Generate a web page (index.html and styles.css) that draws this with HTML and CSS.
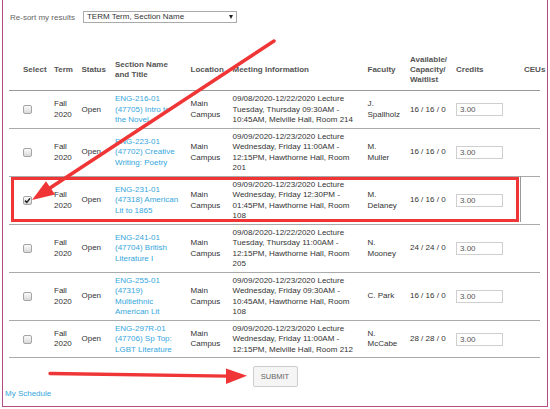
FILE: index.html
```html
<!DOCTYPE html>
<html lang="en">

<head>
    <meta charset="UTF-8">
    <meta name="viewport" content="width=device-width, initial-scale=1.0">
    <title>Section Search Results</title>
    <link rel="stylesheet" href="styles.css">
</head>

<body>
    <div class="page">
        <div class="sort-bar">
            <span class="sort-label">Re-sort my results</span>
            <span class="select-wrap">
                <select class="sort-select">
                    <option>TERM Term, Section Name</option>
                </select>
            </span>
        </div>

        <table class="results">
            <colgroup>
                <col class="c-select">
                <col class="c-term">
                <col class="c-status">
                <col class="c-section">
                <col class="c-location">
                <col class="c-meeting">
                <col class="c-faculty">
                <col class="c-avail">
                <col class="c-credits">
                <col class="c-ceus">
            </colgroup>
            <thead>
                <tr>
                    <th class="select">Select</th>
                    <th>Term</th>
                    <th>Status</th>
                    <th class="section">Section Name and Title</th>
                    <th>Location</th>
                    <th class="meeting">Meeting Information</th>
                    <th class="faculty">Faculty</th>
                    <th class="avail">Available/ Capacity/ Waitlist</th>
                    <th>Credits</th>
                    <th>CEUs</th>
                </tr>
            </thead>
            <tbody>
                <tr>
                    <td class="select"><span class="check"></span></td>
                    <td>Fall 2020</td>
                    <td>Open</td>
                    <td class="section"><a href="#">ENG-216-01 (47705) Intro to the Novel</a></td>
                    <td>Main Campus</td>
                    <td class="meeting">09/08/2020-12/22/2020 Lecture Tuesday, Thursday 09:30AM - 10:45AM, Melville Hall, Room 214</td>
                    <td class="faculty">J. Spallholz</td>
                    <td class="avail">16 / 16 / 0</td>
                    <td><input class="credits" type="text" value="3.00"></td>
                    <td></td>
                </tr>
                <tr>
                    <td class="select"><span class="check"></span></td>
                    <td>Fall 2020</td>
                    <td>Open</td>
                    <td class="section"><a href="#">ENG-223-01 (47702) Creative Writing: Poetry</a></td>
                    <td>Main Campus</td>
                    <td class="meeting">09/09/2020-12/23/2020 Lecture Wednesday, Friday 11:00AM - 12:15PM, Hawthorne Hall, Room 201</td>
                    <td class="faculty">M. Muller</td>
                    <td class="avail">16 / 16 / 0</td>
                    <td><input class="credits" type="text" value="3.00"></td>
                    <td></td>
                </tr>
                <tr>
                    <td class="select">
                        <span class="check checked">
                            <svg width="7" height="7" viewBox="0 0 7 7"><path d="M1 3.6 L2.8 5.4 L6 1.4" fill="none" stroke="#222" stroke-width="1.5"/></svg>
                        </span>
                    </td>
                    <td>Fall 2020</td>
                    <td>Open</td>
                    <td class="section"><a href="#">ENG-231-01 (47318) American Lit to 1865</a></td>
                    <td>Main Campus</td>
                    <td class="meeting">09/09/2020-12/23/2020 Lecture Wednesday, Friday 12:30PM - 01:45PM, Hawthorne Hall, Room 108</td>
                    <td class="faculty">M. Delaney</td>
                    <td class="avail">16 / 16 / 0</td>
                    <td><input class="credits" type="text" value="3.00"></td>
                    <td></td>
                </tr>
                <tr>
                    <td class="select"><span class="check"></span></td>
                    <td>Fall 2020</td>
                    <td>Open</td>
                    <td class="section"><a href="#">ENG-241-01 (47704) British Literature I</a></td>
                    <td>Main Campus</td>
                    <td class="meeting">09/08/2020-12/22/2020 Lecture Tuesday, Thursday 11:00AM - 12:15PM, Hawthorne Hall, Room 205</td>
                    <td class="faculty">N. Mooney</td>
                    <td class="avail">24 / 24 / 0</td>
                    <td><input class="credits" type="text" value="3.00"></td>
                    <td></td>
                </tr>
                <tr>
                    <td class="select"><span class="check"></span></td>
                    <td>Fall 2020</td>
                    <td>Open</td>
                    <td class="section"><a href="#">ENG-255-01 (47319) Multiethnic American Lit</a></td>
                    <td>Main Campus</td>
                    <td class="meeting">09/09/2020-12/23/2020 Lecture Wednesday, Friday 09:30AM - 10:45AM, Hawthorne Hall, Room 108</td>
                    <td class="faculty">C. Park</td>
                    <td class="avail">16 / 16 / 0</td>
                    <td><input class="credits" type="text" value="3.00"></td>
                    <td></td>
                </tr>
                <tr>
                    <td class="select"><span class="check"></span></td>
                    <td>Fall 2020</td>
                    <td>Open</td>
                    <td class="section"><a href="#">ENG-297R-01 (47706) Sp Top: LGBT Literature</a></td>
                    <td>Main Campus</td>
                    <td class="meeting">09/09/2020-12/23/2020 Lecture Wednesday, Friday 11:00AM - 12:15PM, Melville Hall, Room 212</td>
                    <td class="faculty">N. McCabe</td>
                    <td class="avail">28 / 28 / 0</td>
                    <td><input class="credits" type="text" value="3.00"></td>
                    <td></td>
                </tr>
            </tbody>
        </table>

        <div class="submit-row">
            <button class="submit-btn" type="button">SUBMIT</button>
        </div>

        <a class="schedule-link" href="#">My Schedule</a>
    </div>

    <!-- annotation layer drawn over the screenshot -->
    <svg class="marks" width="550" height="409" viewBox="0 0 550 409">
        <line x1="274" y1="41" x2="50" y2="188" stroke="#ef3535" stroke-width="3.5" stroke-linecap="round"/>
        <polygon points="32,200 55,194.6 46,181.2" fill="#ef3535"/>
        <rect x="12.5" y="178.5" width="505" height="42" fill="none" stroke="#ef3535" stroke-width="3"/>
        <line x1="520.5" y1="176" x2="520.5" y2="222" stroke="#999" stroke-width="1"/>
        <line x1="50" y1="373.5" x2="228" y2="376.2" stroke="#ef3535" stroke-width="3.3" stroke-linecap="round"/>
        <polygon points="247,375.8 226,368.5 226,384" fill="#ef3535"/>
    </svg>
</body>

</html>
```

FILE: styles.css
```css
body {
    margin: 0;
    font-family: "Liberation Sans", Arial, sans-serif;
    font-size: 8px;
    color: #333;
    background: #fff;
}

a {
    color: #35a6dd;
    text-decoration: none;
}

.page {
    box-sizing: border-box;
    width: 546px;
    height: 407px;
    margin-left: 2px;
    padding: 11px 6px 0;
    border: 1px solid #b24d86;
    border-top: none;
}

/* sort bar */

.sort-bar {
    display: flex;
    align-items: center;
    gap: 8px;
    height: 12px;
    padding-left: 1px;
}

.sort-label {
    color: #666;
}

.select-wrap {
    position: relative;
}

.select-wrap::after {
    content: "";
    position: absolute;
    right: 4px;
    top: 4px;
    border-left: 2.5px solid transparent;
    border-right: 2.5px solid transparent;
    border-top: 4px solid #222;
}

.sort-select {
    appearance: none;
    display: block;
    box-sizing: border-box;
    width: 154px;
    height: 12px;
    margin: 0;
    padding: 0 3px;
    border: 1px solid #aaa;
    border-radius: 0;
    background: #fff;
    font-family: inherit;
    font-size: 8px;
    line-height: 10px;
    color: #333;
}

/* results table */

.results {
    width: 531px;
    margin-top: 27px;
    border-collapse: collapse;
    table-layout: fixed;
}

.c-select { width: 45px; }
.c-term { width: 27.5px; }
.c-status { width: 33.5px; }
.c-section { width: 75.5px; }
.c-location { width: 42px; }
.c-meeting { width: 135px; }
.c-faculty { width: 42.5px; }
.c-avail { width: 46px; }
.c-credits { width: 68px; }
.c-ceus { width: 16px; }

.results th {
    padding: 5px 0 5px 0;
    border-bottom: 1px solid #999;
    font-weight: bold;
    color: #555;
    text-align: left;
    vertical-align: middle;
    line-height: 10px;
}

.results td {
    padding: 3px 0 2px 0;
    border-bottom: 1px solid #aaa;
    vertical-align: middle;
    line-height: 10.5px;
}

.results .select {
    padding-left: 14px;
}

.results .section {
    padding-right: 8.5px;
}

.results .meeting {
    padding-right: 8px;
}

.results .faculty {
    padding-right: 12.5px;
}

.results .avail {
    padding-right: 4px;
}

.check {
    display: block;
    box-sizing: border-box;
    width: 9px;
    height: 9px;
    border: 1px solid #a5a5a5;
    border-radius: 2px;
    background: linear-gradient(#fbfbfb, #d9d9d9);
}

.check svg {
    display: block;
}

.credits {
    display: block;
    box-sizing: border-box;
    width: 47px;
    height: 13px;
    margin: 0;
    padding: 0 3px;
    border: 1px solid #cfcfcf;
    border-radius: 0;
    font-family: inherit;
    font-size: 8px;
    color: #555;
}

/* footer */

.submit-row {
    margin-top: 8px;
    text-align: center;
}

.submit-btn {
    width: 45px;
    height: 21px;
    margin: 0;
    padding: 0;
    border: 1px solid #cdcdcd;
    border-radius: 2px;
    background: #f5f5f5;
    font-family: inherit;
    font-size: 7.5px;
    color: #666;
}

.schedule-link {
    display: block;
    width: max-content;
    margin: 2px 0 0 -4px;
    line-height: 10px;
}

.marks {
    position: absolute;
    top: 0;
    left: 0;
    pointer-events: none;
}
```
